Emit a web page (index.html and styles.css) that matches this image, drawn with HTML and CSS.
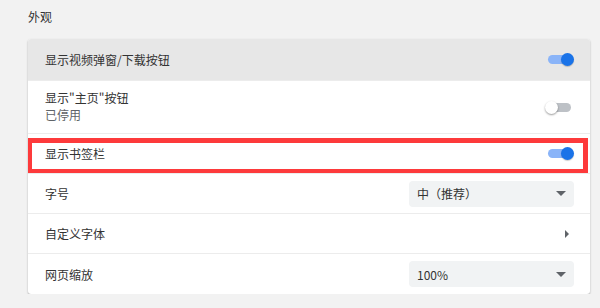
FILE: index.html
```html
<!DOCTYPE html>
<html lang="zh-CN">
<head>
    <meta charset="UTF-8">
    <title>外观</title>
    <link rel="stylesheet" href="styles.css">
</head>
<body>
    <div class="page">
        <h2 class="section-title">外观</h2>
        <div class="card">
            <div class="row row-hover">
                <span class="label">显示视频弹窗/下载按钮</span>
                <span class="toggle on"><span class="track"></span><span class="knob"></span></span>
            </div>
            <div class="row row-tall">
                <div class="label-group">
                    <div class="label">显示"主页"按钮</div>
                    <div class="sub">已停用</div>
                </div>
                <span class="toggle"><span class="track"></span><span class="knob"></span></span>
            </div>
            <div class="row marked">
                <span class="label">显示书签栏</span>
                <span class="toggle on"><span class="track"></span><span class="knob"></span></span>
                <span class="highlight"></span>
            </div>
            <div class="row">
                <span class="label">字号</span>
                <div class="select">
                    <span>中（推荐）</span>
                    <span class="caret"></span>
                </div>
            </div>
            <div class="row">
                <span class="label">自定义字体</span>
                <span class="arrow"></span>
            </div>
            <div class="row row-last">
                <span class="label">网页缩放</span>
                <div class="select">
                    <span>100%</span>
                    <span class="caret"></span>
                </div>
            </div>
        </div>
    </div>
</body>
</html>
```

FILE: styles.css
```css
body {
    margin: 0;
    background-color: #f2f2f2;
    font-family: "Noto Sans CJK SC", "Noto Sans", sans-serif;
    font-size: 12px;
    color: #333;
}

.page {
    padding: 9px 10px 0 28px;
}

.section-title {
    margin: 0 0 15px 0;
    font-size: 12px;
    font-weight: normal;
    line-height: 15px;
    color: #333;
}

.card {
    background-color: #fff;
    border-radius: 3px;
    box-shadow: 0 1px 2px rgba(0, 0, 0, 0.3);
    overflow: hidden;
}

.row {
    position: relative;
    display: flex;
    align-items: center;
    justify-content: space-between;
    min-height: 39px;
    padding: 0 16px 0 17px;
    border-top: 1px solid #ececec;
}

.row-hover {
    min-height: 41px;
    border-top: none;
    background-color: #e7e7e7;
}

.row-tall {
    min-height: 52px;
}

.row-last {
    min-height: 40px;
}

.label {
    line-height: 15px;
}

.label-group {
    margin-bottom: 3px;
}

.label-group .label,
.label-group .sub {
    line-height: 17px;
}

.sub {
    color: #5f6368;
}

/* toggle switch */
.toggle {
    position: relative;
    width: 29px;
    height: 13px;
}

.toggle .track {
    position: absolute;
    left: 3px;
    right: 3px;
    top: 2px;
    height: 9px;
    border-radius: 5px;
    background-color: #bdc1c6;
}

.toggle .knob {
    position: absolute;
    left: 0;
    top: 0;
    width: 13px;
    height: 13px;
    border-radius: 50%;
    background-color: #fff;
    box-shadow: 0 1px 2px rgba(0, 0, 0, 0.4);
}

.toggle.on .track {
    background-color: #8ab4f8;
}

.toggle.on .knob {
    left: 16px;
    background-color: #1a73e8;
    box-shadow: 0 1px 1px rgba(0, 0, 0, 0.2);
}

/* red annotation box */
.highlight {
    position: absolute;
    left: -1px;
    right: 2px;
    top: 4px;
    bottom: -1px;
    border: 5px solid #fd3a3b;
}

/* dropdown */
.select {
    display: flex;
    align-items: center;
    justify-content: space-between;
    width: 165px;
    height: 26px;
    box-sizing: border-box;
    padding: 0 8px 0 8px;
    background-color: #f1f3f4;
    border-radius: 4px;
    color: #333;
}

.caret {
    width: 0;
    height: 0;
    border-left: 5px solid transparent;
    border-right: 5px solid transparent;
    border-top: 5px solid #5f6368;
}

.arrow {
    width: 0;
    height: 0;
    margin-right: 5px;
    border-top: 4px solid transparent;
    border-bottom: 4px solid transparent;
    border-left: 4px solid #5f6368;
}
```
